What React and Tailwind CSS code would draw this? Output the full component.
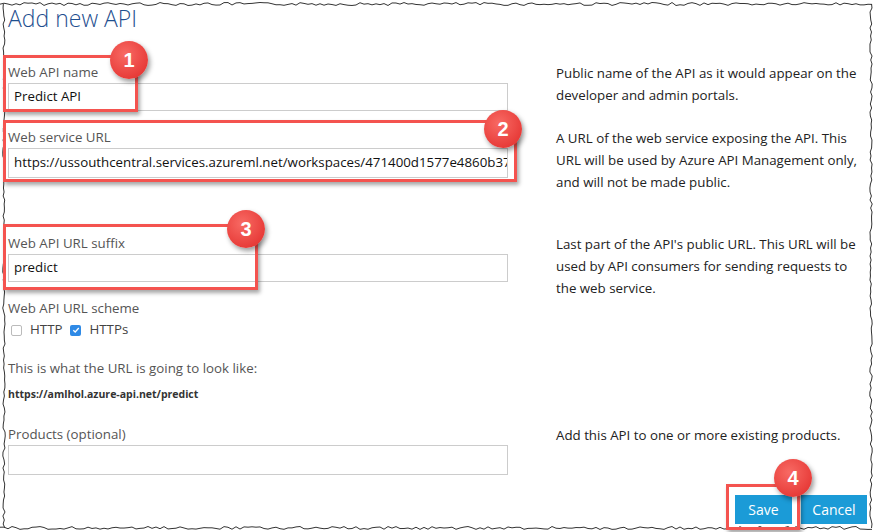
import React from "react"

// torn-paper edge around the screenshot
function jag(points, seed) {
  let s = seed
  const rnd = () => {
    s = (s * 9301 + 49297) % 233280
    return s / 233280
  }
  return points.map(([x, y, dx, dy]) => `${x + (rnd() - 0.5) * dx},${y + (rnd() - 0.5) * dy}`).join(" ")
}

function TornFrame() {
  const top = []
  for (let x = 0; x <= 872; x += 4) top.push([x, 4, 0, 3])
  const right = []
  for (let y = 4; y <= 528; y += 4) right.push([871, y, 2.5, 0])
  const bottom = []
  for (let x = 872; x >= 0; x -= 4) bottom.push([x, 528, 0, 3])
  const left = []
  for (let y = 528; y >= 4; y -= 4) left.push([4, y, 2.5, 0])
  return (
    <svg className="pointer-events-none absolute inset-0" width="876" height="532">
      <polyline points={jag(top, 7)} fill="none" stroke="#333" strokeWidth="1" />
      <polyline points={jag(right, 13)} fill="none" stroke="#333" strokeWidth="1" />
      <polyline points={jag(bottom, 29)} fill="none" stroke="#333" strokeWidth="1" />
      <polyline points={jag(left, 41)} fill="none" stroke="#333" strokeWidth="1" />
    </svg>
  )
}

function Callout({ n, box, dot }) {
  return (
    <>
      <div
        className="absolute border-[3px] border-[#f4534f] shadow-[2px_3px_4px_rgba(0,0,0,0.35)]"
        style={{ left: box[0], top: box[1], width: box[2], height: box[3] }}
      />
      <div
        className="absolute flex h-[38px] w-[38px] items-center justify-center rounded-full bg-[radial-gradient(circle_at_40%_35%,#f86a64_0%,#e83d3a_70%,#d63230_100%)] text-[20px] font-bold text-white shadow-[2px_3px_5px_rgba(0,0,0,0.4)] font-['Liberation_Sans',sans-serif]"
        style={{ left: dot[0] - 19, top: dot[1] - 19 }}
      >
        {n}
      </div>
    </>
  )
}

function Field({ label, value, h = "h-[28px]" }) {
  return (
    <div>
      <div className="text-[13.3px] leading-[20px] text-[#555]">{label}</div>
      <div className={`mt-px flex ${h} w-[500px] items-center overflow-hidden whitespace-nowrap border border-[#ccc] bg-white px-[5px] text-[13.3px] text-[#111]`}>
        {value}
      </div>
    </div>
  )
}

function Desc({ children }) {
  return <p className="w-[310px] text-[13.3px] leading-[22px] text-[#222]">{children}</p>
}

export default function App() {
  return (
    <div className="relative h-[532px] w-[876px] overflow-hidden bg-white font-['Open_Sans',sans-serif]">
      <div className="pl-2">
        <h1 className="pt-[2px] text-[23px] font-light leading-[32px] text-[#1f4f8f]">Add new API</h1>

        <div className="mt-[28px] grid grid-cols-[500px_1fr] gap-x-12">
          <Field label="Web API name" value="Predict API" />
          <div>
            <Desc>Public name of the API as it would appear on the developer and admin portals.</Desc>
          </div>
        </div>

        <div className="mt-[16px] grid grid-cols-[500px_1fr] gap-x-12">
          <Field
            label="Web service URL"
            value="https://ussouthcentral.services.azureml.net/workspaces/471400d1577e4860b370"
            h="h-[30px]"
          />
          <div>
            <Desc>A URL of the web service exposing the API. This URL will be used by Azure API Management only, and will not be made public.</Desc>
          </div>
        </div>

        <div className="mt-[40px] grid grid-cols-[500px_1fr] gap-x-12">
          <div>
            <Field label="Web API URL suffix" value="predict" />
            <div className="mt-[16px] text-[13.3px] leading-[20px] text-[#555]">Web API URL scheme</div>
            <div className="mt-[2px] flex h-[20px] items-center text-[13.3px] text-[#444]">
              <span className="ml-[3px] h-[11px] w-[11px] rounded-[2px] border border-[#bbb] bg-white" />
              <span className="ml-[8px]">HTTP</span>
              <span className="ml-[8px] flex h-[11px] w-[11px] items-center justify-center rounded-[2px] bg-[#2f8ae6]">
                <svg width="8" height="8" viewBox="0 0 8 8">
                  <path d="M1.3 4.2 L3.2 6 L6.8 2" fill="none" stroke="#fff" strokeWidth="1.3" />
                </svg>
              </span>
              <span className="ml-[8px]">HTTPs</span>
            </div>
            <div className="mt-[18px] text-[13.3px] leading-[20px] text-[#555]">This is what the URL is going to look like:</div>
            <div className="mt-[8px] text-[10.5px] font-bold leading-[16px] text-[#333]">https://amlhol.azure-api.net/predict</div>
          </div>
          <div>
            <Desc>Last part of the API's public URL. This URL will be used by API consumers for sending requests to the web service.</Desc>
          </div>
        </div>

        <div className="mt-[22px] grid grid-cols-[500px_1fr] gap-x-12">
          <Field label="Products (optional)" value="" h="h-[30px]" />
          <div>
            <Desc>Add this API to one or more existing products.</Desc>
          </div>
        </div>

        <div className="mt-[20px] flex justify-end gap-[9px] pr-[9px]">
          <button className="h-[29px] w-[57px] bg-[#1b9bd7] text-[14px] text-white">Save</button>
          <button className="h-[29px] w-[66px] bg-[#1b9bd7] text-[14px] text-white">Cancel</button>
        </div>
      </div>

      <TornFrame />

      <Callout n="1" box={[3, 55, 135, 57]} dot={[129, 60]} />
      <Callout n="2" box={[3, 120, 514, 62]} dot={[503, 129]} />
      <Callout n="3" box={[3, 224, 255, 66]} dot={[246, 229]} />
      <Callout n="4" box={[726, 484, 74, 46]} dot={[793, 478]} />
    </div>
  )
}
